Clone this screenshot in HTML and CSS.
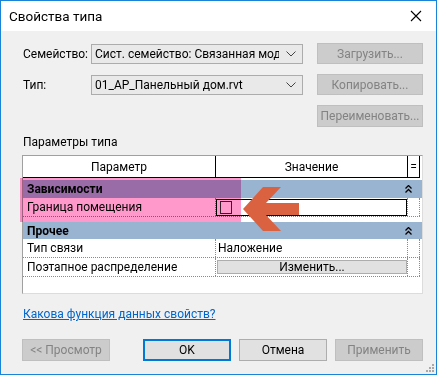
FILE: index.html
```html
<!DOCTYPE html>
<html>
  <head>
    <title>Свойства типа</title>
    <link rel="stylesheet" href="styles.css">
  </head>
  <body>
    <div class="window">
      <div class="titlebar">
        <span class="title">Свойства типа</span>
        <svg class="close" width="12" height="12" viewBox="0 0 12 12"><path d="M1 1L11 11M11 1L1 11" stroke="#000" stroke-width="1.1" fill="none"/></svg>
      </div>
      <div class="content">
        <div class="topForm">
          <label>Семейство:</label>
          <div class="combo">
            <span class="comboText">Сист. семейство: Связанная модель Revit</span>
            <svg width="10" height="6" viewBox="0 0 10 6"><path d="M0.5 0.5L5 5L9.5 0.5" stroke="#444" fill="none"/></svg>
          </div>
          <button class="btn disabled">Загрузить...</button>

          <label>Тип:</label>
          <div class="combo">
            <span class="comboText">01_АР_Панельный дом.rvt</span>
            <svg width="10" height="6" viewBox="0 0 10 6"><path d="M0.5 0.5L5 5L9.5 0.5" stroke="#444" fill="none"/></svg>
          </div>
          <button class="btn disabled">Копировать...</button>

          <span></span><span></span>
          <button class="btn disabled">Переименовать...</button>
        </div>

        <div class="sectionTitle">Параметры типа</div>

        <div class="grid">
          <div class="headRow">
            <div class="c1">Параметр</div>
            <div class="c2">Значение</div>
            <div class="c3">=</div>
          </div>

          <div class="group first">
            <span>Зависимости</span>
            <svg class="collapse" width="7" height="8" viewBox="0 0 7 8"><path d="M0.5 3.5L3.5 0.5L6.5 3.5M0.5 7.5L3.5 4.5L6.5 7.5" stroke="#000" stroke-width="1.3" fill="none"/></svg>
          </div>
          <div class="row">
            <div class="c1">Граница помещения</div>
            <div class="c2 edit"><div class="valueBox"><span class="check"></span></div></div>
            <div class="c3"></div>
          </div>

          <div class="group second">
            <span>Прочее</span>
            <svg class="collapse" width="7" height="8" viewBox="0 0 7 8"><path d="M0.5 3.5L3.5 0.5L6.5 3.5M0.5 7.5L3.5 4.5L6.5 7.5" stroke="#000" stroke-width="1.3" fill="none"/></svg>
          </div>
          <div class="row">
            <div class="c1">Тип связи</div>
            <div class="c2">Наложение</div>
            <div class="c3"></div>
          </div>
          <div class="row">
            <div class="c1">Поэтапное распределение</div>
            <div class="c2 edit"><div class="cellBtn">Изменить...</div></div>
            <div class="c3"></div>
          </div>

          <div class="highlight"></div>
          <svg class="arrow" width="60" height="48" viewBox="243 186 60 48">
            <polygon points="243,209 263,187 281,187 266,203 299,203 299,215 266,215 281,231 263,231" fill="#db6240"/>
          </svg>
        </div>

        <a class="help" href="#">Какова функция данных свойств?</a>

        <div class="footer">
          <button class="btn disabled preview">&lt;&lt; Просмотр</button>
          <button class="btn default">OK</button>
          <button class="btn">Отмена</button>
          <button class="btn disabled">Применить</button>
        </div>
        <svg class="grip" width="9" height="9" viewBox="0 0 9 9">
          <rect x="7" y="1" width="2" height="2" fill="#a8a8a8"/>
          <rect x="4" y="4" width="2" height="2" fill="#a8a8a8"/>
          <rect x="7" y="4" width="2" height="2" fill="#a8a8a8"/>
          <rect x="1" y="7" width="2" height="2" fill="#a8a8a8"/>
          <rect x="4" y="7" width="2" height="2" fill="#a8a8a8"/>
          <rect x="7" y="7" width="2" height="2" fill="#a8a8a8"/>
        </svg>
      </div>
    </div>
  </body>
</html>
```

FILE: styles.css
```css
body{
    margin:0;
    font-family: Roboto, "Liberation Sans", sans-serif;
    font-size:12px;
    color:#000;
}

.window{
    width:437px;
    height:375px;
    box-sizing:border-box;
    border:1px solid #1883d7;
    display:flex;
    flex-direction:column;
    background:#f0f0f0;
}

.titlebar{
    height:30px;
    background:#fff;
    display:flex;
    align-items:center;
    padding:0 9px 0 8px;
}
.title{
    flex:1;
    font-size:13.5px;
}
.close{
    margin-top:-1px;
    margin-right:5px;
}

.content{
    flex:1;
    position:relative;
    padding:12px 12px 0 21px;
}

.topForm{
    display:grid;
    grid-template-columns:69px 212px 106px;
    grid-template-rows:21px 21px 22px;
    row-gap:10px;
    column-gap:0;
    align-items:center;
}
.topForm label{
    padding-left:1px;
}
.topForm .btn{
    margin-left:14px;
    height:100%;
}

.combo{
    height:20px;
    box-sizing:border-box;
    border:1px solid #acacac;
    background:#e9e9e9;
    display:flex;
    align-items:center;
    padding:0 6px 0 3px;
}
.combo .comboText{
    flex:1;
    white-space:nowrap;
    overflow:hidden;
    margin-right:7px;
}

.btn{
    font-family:inherit;
    font-size:12px;
    box-sizing:border-box;
    background:#e1e1e1;
    border:1px solid #adadad;
    color:#000;
    padding:0;
    width:106px;
    height:22px;
}
.btn.disabled{
    background:#cccccc;
    border-color:#bfbfbf;
    color:#838383;
}
.btn.default{
    border:2px solid #0078d7;
}

.sectionTitle{
    margin-top:8px;
    line-height:15px;
    padding-left:1px;
}

.grid{
    position:relative;
    margin-top:5px;
    width:401px;
    height:139px;
    box-sizing:border-box;
    border:1px solid #a0a0a0;
    border-right-color:#dcdcdc;
    border-bottom-color:#dcdcdc;
    background:#fff;
}

.headRow{
    display:flex;
    height:21px;
    border-bottom:1px solid #000;
    margin-right:2px;
}
.headRow div{
    display:flex;
    align-items:center;
    justify-content:center;
    border-right:1px solid #000;
    box-sizing:border-box;
}
.c1{
    width:193px;
    flex:none;
}
.c2{
    width:192px;
    flex:none;
}
.c3{
    width:12px;
    flex:none;
}

.group{
    height:17px;
    background:#99b4d1;
    font-weight:bold;
    display:flex;
    align-items:center;
    padding:0 10px 0 4px;
}
.group span{
    flex:1;
}
.group.first{
    margin-top:2px;
    height:18px;
}
.group.second{
    margin-top:5px;
}

.row{
    display:flex;
    height:18px;
    border-bottom:1px dotted #8a8a8a;
    margin-right:2px;
}
.row div{
    box-sizing:border-box;
    border-right:1px dotted #8a8a8a;
    display:flex;
    align-items:center;
}
.row .c1{
    padding-left:4px;
}
.row .c2{
    padding-left:2px;
}
.row .edit{
    padding:1px 0 0 0;
    align-items:stretch;
}

.valueBox{
    flex:1;
    border:1px solid #000 !important;
    background:#fff;
    padding-left:3px;
}
.check{
    width:10px;
    height:11px;
    border:1px solid #333;
    background:#fff;
}

.cellBtn{
    flex:1;
    justify-content:center;
    background:#e1e1e1;
    border:1px solid #adadad !important;
    margin:1px 0 2px 1px;
}

.highlight{
    position:absolute;
    left:-3px;
    top:22px;
    width:221px;
    height:44px;
    background:#ff99cc;
    mix-blend-mode:multiply;
}
.arrow{
    position:absolute;
    left:220px;
    top:30px;
}

.help{
    display:block;
    width:max-content;
    margin-top:13px;
    line-height:15px;
    color:#0066cc;
    padding-left:1px;
}

.footer{
    display:flex;
    margin-top:17px;
    gap:8px;
}
.footer .btn{
    width:88px;
}
.footer .preview{
    margin-right:25px;
}

.grip{
    position:absolute;
    right:2px;
    bottom:2px;
}
```
